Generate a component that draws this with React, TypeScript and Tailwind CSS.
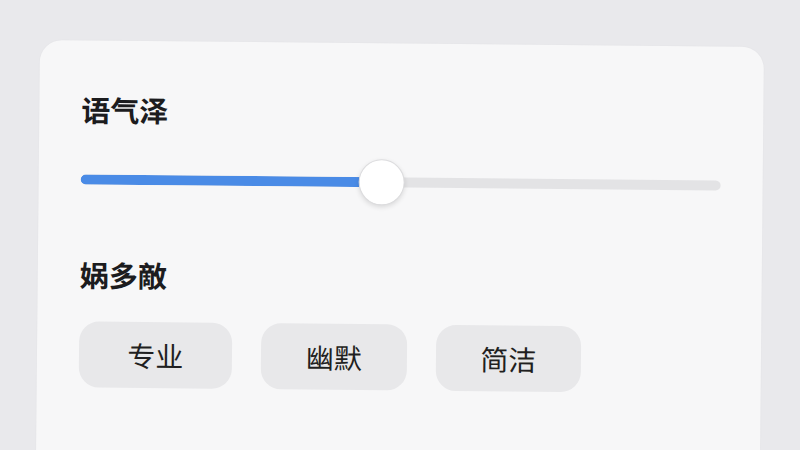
import React from "react";

export default function App() {
  const value = 0.471;
  return (
    <div
      className="w-[800px] h-[450px] overflow-hidden bg-[#e9e9ec] pt-[40px] pl-[40px]"
      style={{ fontFamily: '"Noto Sans CJK SC", "Noto Sans", sans-serif' }}
    >
      <div className="w-[724px] h-[460px] rounded-[22px] bg-[#f7f7f8] origin-top-left rotate-[0.55deg] px-[42px] pt-[50px] shadow-[0_0_2px_rgba(0,0,0,0.04)]">
        <div className="text-[29px] leading-[36px] font-bold text-[#1c1c1e]">语气泽</div>
        <div className="relative mt-[29px] h-[48px] flex items-center">
          <div className="w-full h-[10px] rounded-full bg-[#e3e3e5] overflow-hidden">
            <div className="h-full rounded-full bg-[#4a8be6]" style={{ width: `${value * 100}%` }} />
          </div>
          <div
            className="absolute top-[1px] w-[46px] h-[46px] rounded-full bg-white border border-[#dcdcde] shadow-[0_2px_5px_rgba(0,0,0,0.12)]"
            style={{ left: `calc(${value * 100}% - 23px)` }}
          />
        </div>
        <div className="mt-[52px] text-[29px] leading-[36px] font-semibold text-[#1c1c1e]">娲多敵</div>
        <div className="mt-[30px] flex gap-[29px]">
          <div className="w-[153px] h-[66px] rounded-[20px] bg-[#e8e8ea] flex items-center justify-center text-[28px] text-[#1f1f21]">专业</div>
          <div className="w-[146px] h-[66px] rounded-[20px] bg-[#e8e8ea] flex items-center justify-center text-[28px] text-[#1f1f21]">幽默</div>
          <div className="w-[145px] h-[66px] rounded-[20px] bg-[#e8e8ea] flex items-center justify-center text-[28px] text-[#1f1f21]">简洁</div>
        </div>
      </div>
    </div>
  );
}
